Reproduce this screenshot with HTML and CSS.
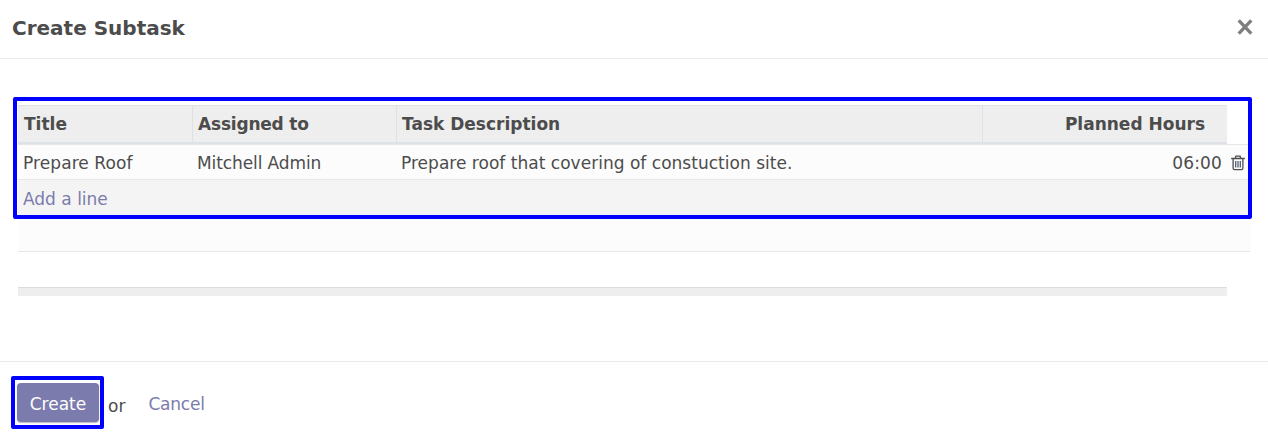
FILE: index.html
```html
<!DOCTYPE html>
<html lang="en">
<head>
<meta charset="utf-8">
<title>Create Subtask</title>
<link rel="stylesheet" href="styles.css">
</head>
<body>
<div class="dialog">
  <header class="dialog-header">
    <h1 class="dialog-title">Create Subtask</h1>
    <button class="close" aria-label="Close"><svg width="16" height="16" viewBox="0 0 16 16"><path d="M1.7 1.4 14.3 14.6M14.3 1.4 1.7 14.6" stroke="#7f7f7f" stroke-width="3.3" fill="none"/></svg></button>
  </header>
  <main class="dialog-body">
    <div class="grid">
      <div class="row head">
        <div class="th title">Title</div>
        <div class="th assigned">Assigned to</div>
        <div class="th">Task Description</div>
        <div class="th hours">Planned Hours</div>
      </div>
      <div class="row line">
        <div class="td name">Prepare Roof</div>
        <div class="td person">Mitchell Admin</div>
        <div class="td description">Prepare roof that covering of constuction site.</div>
        <div class="td num">06:00</div>
        <div class="trash"><svg width="14" height="16" viewBox="0 0 14 16" fill="none" stroke="#4c4c4c" stroke-width="1.3"><path d="M.2 3.5H13.8M4.2 3.4 4.9 1.2H9.1L9.8 3.4M2.1 3.8V13Q2.1 14.7 3.6 14.7H10.4Q11.9 14.7 11.9 13V3.8"/><path stroke="#4b6078" d="M4.7 6V12.4M7 6V12.4M9.3 6V12.4"/></svg></div>
      </div>
      <div class="row add"><a class="link">Add a line</a></div>
      <div class="row blank"></div>
      <div class="row spacer"></div>
      <div class="foot"></div>
      <div class="mark mark-table"></div>
    </div>
  </main>
  <footer class="dialog-footer">
    <div class="primary"><button class="btn">Create</button><div class="mark mark-button"></div></div>
    <span class="or">or</span>
    <a class="link cancel">Cancel</a>
  </footer>
</div>
</body>
</html>
```
FILE: styles.css
```css
* { box-sizing: border-box; }
body { margin: 0; background: #fff; color: #4c4c4c; font: 17px/24px "DejaVu Sans", sans-serif; overflow: hidden; }
.dialog { height: 446px; display: flex; flex-direction: column; }
.dialog-header { height: 59px; border-bottom: 1px solid #e9e9e9; display: flex; justify-content: space-between; padding: 14px 15px 0 12px; }
.dialog-title { margin: 0; font-size: 20px; line-height: 28px; font-weight: bold; }
.close { border: 0; background: none; padding: 5px 0 0; height: 21px; display: flex; }
.dialog-body { height: 302px; padding: 46px 18px 0; }
.grid { position: relative; width: 1232px; }
.row { display: grid; grid-template-columns: 175px 204px 586px 244px 23px; border-bottom: 1px solid #e5e7e9; white-space: nowrap; }
.head { height: 40px; font-weight: bold; }
.th { height: 39px; background: #eee; border-top: 1px solid #dee2e6; border-right: 1px solid #dee2e6; border-bottom: 2px solid #dee2e6; padding: 6px 5px; }
.title { padding-left: 6px; }
.assigned { letter-spacing: -.2px; }
.hours { border-right: 0; padding-right: 22px; text-align: right; }
.line { height: 35px; background: #fcfcfc; }
.td { padding: 6px 5px 4px 4px; }
.name { padding-left: 5px; letter-spacing: .08px; }
.person { letter-spacing: -.1px; }
.description { letter-spacing: .02px; }
.num { text-align: right; letter-spacing: .15px; }
.trash { padding: 10px 0 0 4px; line-height: 0; }
.add { height: 36px; display: block; background: #f4f4f4; padding: 7px 5px 4px; }
.blank { height: 36px; background: #fcfcfc; }
.spacer { height: 35px; border: 0; }
.foot { width: 1209px; height: 9px; background: #eee; border-top: 1px solid #dcdcdc; }
.link { color: #7c7bad; }
.mark { position: absolute; border: 4px solid #00f; border-radius: 2px; pointer-events: none; }
.mark-table { left: -5px; top: -8px; width: 1239px; height: 122px; }
.dialog-footer { height: 85px; border-top: 1px solid #e9e9e9; padding: 21px 17px; display: flex; align-items: flex-start; }
.primary { position: relative; }
.mark-button { left: -6px; top: -7px; width: 93px; height: 53px; }
.btn { display: block; width: 82px; height: 39px; border: 0; border-radius: 4px; background: #7c7bad; color: #fff; font: inherit; padding: 2px 0 0; box-shadow: 0 1px 1px #bbb; }
.or { margin: 11px 0 0 9px; }
.cancel { margin: 9px 0 0 23px; letter-spacing: -.2px; }
```
